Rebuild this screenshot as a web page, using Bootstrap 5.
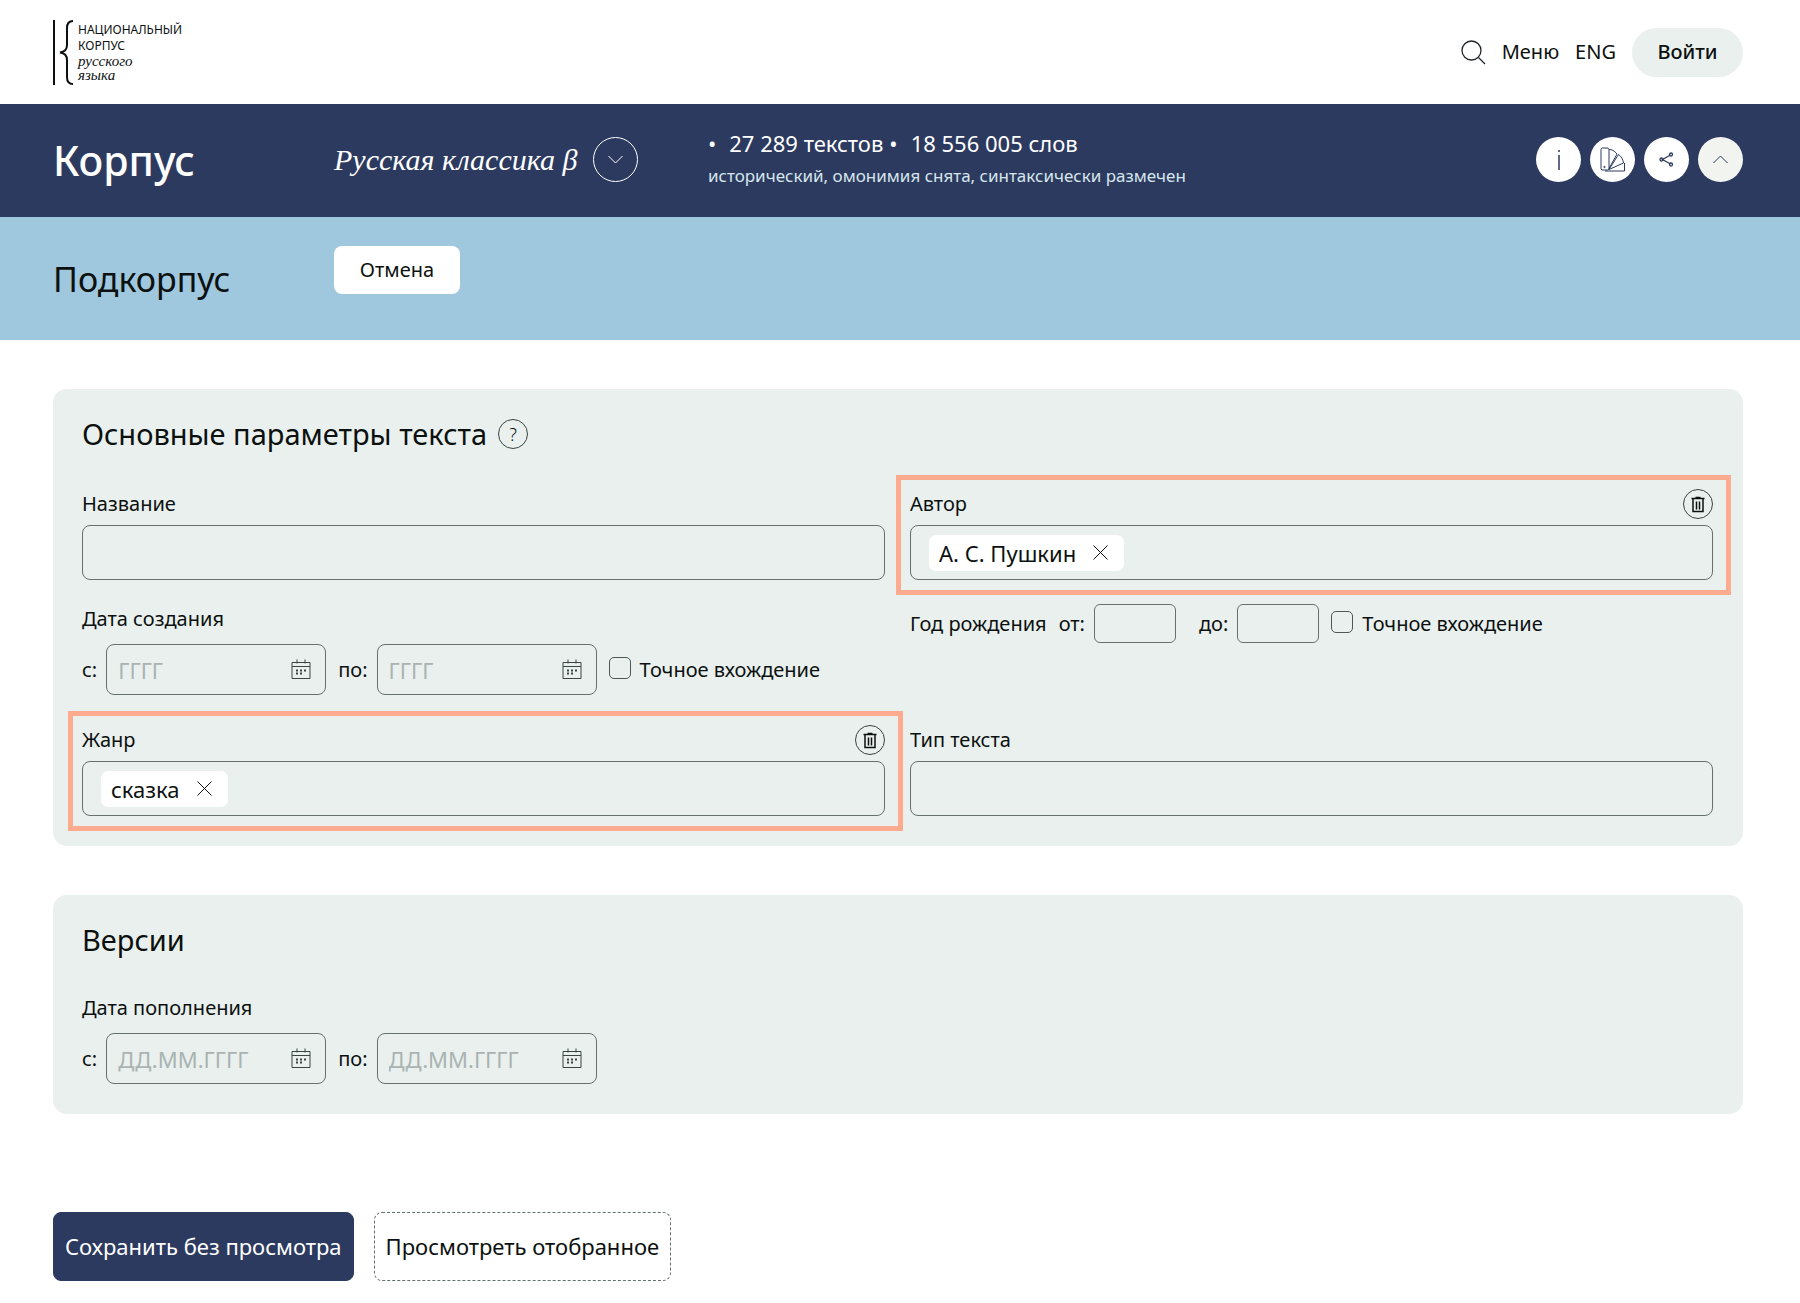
<!DOCTYPE html>
<html lang="ru">
<head>
<meta charset="utf-8">
<meta name="viewport" content="width=device-width, initial-scale=1">
<title>Национальный корпус русского языка</title>
<link href="https://cdn.jsdelivr.net/npm/bootstrap@5.3.0/dist/css/bootstrap.min.css" rel="stylesheet">
<style>
:root { --navy: #2d3a5f; --sky: #9fc7de; --mint: #e9f0ee; --ink: #0c1110; --line: #66706c; --mark: #ffab90; }
body { font-family: "Noto Sans", sans-serif; color: var(--ink); font-size: 20px; line-height: 30px; }
.gutter { padding-left: 53px; padding-right: 57px; }
svg { fill: none; stroke: currentColor; display: block; }
a { color: inherit; text-decoration: none; }
.serif { font-family: "Liberation Serif", serif; font-style: italic; }

.site-head { min-height: 104px; }
.logo-text { font-size: 12px; line-height: 16px; }
.logo-text .serif { font-size: 15px; line-height: 14px; }
.login { --bs-btn-bg: var(--mint); --bs-btn-color: var(--ink); --bs-btn-font-size: 20px; --bs-btn-font-weight: 500; width: 111px; height: 49px; padding: 0; }

.corpus-bar { background: var(--navy); min-height: 113px; padding-bottom: 2px; }
.title-col { width: 281px; flex: none; }
.name-col { width: 374px; flex: none; }
.corpus-title { font-size: 41px; font-weight: 500; line-height: 56px; }
.corpus-name { font-size: 30px; line-height: 40px; }
.stats { font-size: 22px; line-height: 32px; }
.stats li + li { margin-left: 6px; }
.stats li::before { content: "•"; margin-right: 13px; }
.tags { font-size: 17px; line-height: 34px; color: #d5e6ec; }
.round-btn { width: 45px; height: 45px; padding: 0; border: 0; border-radius: 50%; background: #fff; color: var(--navy); }
.round-btn.hollow { background: none; color: #fff; border: 1px solid #fff; }
.round-btn.soft { background: #f2f4f0; }

.sub-bar { background: var(--sky); min-height: 123px; }
.sub-title { font-size: 34px; line-height: 46px; }
.cancel { --bs-btn-bg: #fff; --bs-btn-color: var(--ink); --bs-btn-font-size: 20px; --bs-btn-border-radius: 8px; width: 126px; height: 48px; margin-top: 29px; padding: 0; }

.panel { background: var(--mint); border-radius: 14px; padding: 25px 30px 30px 29px; margin-top: 49px; }
.panel-title { font-size: 29px; line-height: 40px; margin-bottom: 35px; gap: 11px; }
.panel-title.tight { margin-bottom: 33px; }
.help, .trash { width: 30px; height: 30px; padding: 0; background: none; border: 1px solid #3a4441; border-radius: 50%; color: var(--ink); font-size: 18px; line-height: 28px; }
.help { font-weight: 300; }
.params { --bs-gutter-x: 25px; --bs-gutter-y: 0; }
.params > * { margin-bottom: 24px; }
.params > .dates { margin-bottom: 30px; }
.params > .last { margin-bottom: 0; }
.head-row { height: 30px; margin-bottom: 6px; }
.head-row.loose { margin-bottom: 10px; }
.box { border: 1px solid var(--line); border-radius: 8px; background: transparent; color: var(--ink); }
.box:focus-within, .box:focus { background: transparent; border-color: var(--navy); box-shadow: none; }
.text-box { height: 55px; width: 100%; }
.tag-box { padding: 0 18px; }
.tag-box input, .date-box input { flex: 1; min-width: 0; border: 0; outline: 0; background: transparent; padding: 0; }
.chip { height: 36px; background: #fff; border-radius: 7px; padding: 0 16px 0 10px; font-size: 22px; gap: 17px; }
.chip button { border: 0; background: none; padding: 0; color: var(--ink); }
.marked { position: relative; }
.marked::after { content: ""; position: absolute; inset: -14px -18px -15px -14px; border: 5px solid var(--mark); pointer-events: none; }
.date-box { width: 220px; height: 51px; padding: 0 14px 0 11px; font-size: 22px; }
.date-box input::placeholder { color: #aab3b0; opacity: 1; }
.date-box button { border: 0; background: none; padding: 0; color: #3a4441; }
.gap-field { gap: 9px; }
.gap-group { gap: 12px; }
.spread { margin-right: 11px; }
.year-box { width: 82px; height: 39px; border-radius: 6px; }
.tick { width: 22px; height: 22px; margin: 0 0 3px; border: 1px solid #4d5754; border-radius: 6px; background-color: transparent; }

.actions { margin-top: 98px; gap: 20px; padding-bottom: 22px; }
.actions .btn { --bs-btn-font-size: 22px; --bs-btn-border-radius: 8px; height: 69px; padding: 0 11px; }
.save { --bs-btn-bg: var(--navy); --bs-btn-color: #fff; --bs-btn-border-color: var(--navy); }
.preview { --bs-btn-color: var(--ink); --bs-btn-border-color: #66706c; border-style: dashed; }
</style>
<script src="https://cdn.jsdelivr.net/npm/bootstrap@5.3.0/dist/js/bootstrap.bundle.min.js"></script>
</head>
<body>
<svg class="d-none" aria-hidden="true">
  <symbol id="calendar" viewBox="0 0 20 21"><path d="M1 3.5h18v16H1zM1 7.5h18M6 .5v4M14 .5v4"/><path d="M5 11.5h2M9 11.5h2M13 11.5h2M5 14.5h2M9 14.5h2" stroke-width="2"/></symbol>
  <symbol id="bin" viewBox="0 0 14 17"><path d="M.5 2.5h13M4.500 1.500h5" stroke-width="1.500"/><path d="M2 3v12.500h10V3M5.500 5.500v8M8.500 5.500v8" stroke-width="1.500"/></symbol>
  <symbol id="cross" viewBox="0 0 15 15"><path d="M.5.5l14 14M14.500.5l-14 14"/></symbol>
</svg>

<header class="site-head gutter d-flex align-items-center justify-content-between">
  <a href="#" class="d-flex align-items-center">
    <svg width="21" height="67" viewBox="0 0 21 67" stroke-width="2"><path d="M1 1v65M20 2c-4 0-6 2-6 7v17c0 5-3 7-7 7.500 4 .5 7 2.500 7 7.500v17c0 5 2 7 6 7"/></svg>
    <span class="logo-text ps-1">НАЦИОНАЛЬНЫЙ<br>КОРПУС<br><span class="serif d-block">русского<br>языка</span></span>
  </a>
  <nav class="d-flex align-items-center gap-3">
    <button class="btn p-0 border-0" aria-label="Поиск"><svg width="25" height="25" viewBox="0 0 25 25" stroke-width="1.300"><circle cx="10.500" cy="10.500" r="9.500"/><path d="M17.500 17.500l6.500 6.500"/></svg></button>
    <a href="#">Меню</a>
    <a href="#">ENG</a>
    <button class="btn login rounded-pill">Войти</button>
  </nav>
</header>

<section class="corpus-bar gutter d-flex align-items-center text-white">
  <h1 class="title-col corpus-title m-0">Корпус</h1>
  <div class="name-col d-flex align-items-center gap-3">
    <span class="serif corpus-name">Русская классика β</span>
    <button class="round-btn hollow d-flex align-items-center justify-content-center" aria-label="Выбрать корпус"><svg width="15" height="9" viewBox="0 0 15 9"><path d="M.5 1l7 7 7-7"/></svg></button>
  </div>
  <div class="flex-grow-1">
    <ul class="stats list-unstyled d-flex m-0"><li>27 289 текстов</li><li>18 556 005 слов</li></ul>
    <div class="tags">исторический, омонимия снята, синтаксически размечен</div>
  </div>
  <div class="d-flex gap-field">
    <button class="round-btn d-flex align-items-center justify-content-center" aria-label="Информация"><svg width="4" height="22" viewBox="0 0 4 22" stroke-width="1.500"><path d="M2 1v2M2 6v15"/></svg></button>
    <button class="round-btn d-flex align-items-center justify-content-center" aria-label="Палитра"><svg width="25" height="25" viewBox="0 0 25 25"><path d="M1 2.500a2 2 0 0 1 1-1.500h6l1 1.500V22l-1.500 1H2l-1-1zM9 2.500c3 0 5 1 8 4.500L9 21.500M9 22.500L18.500 7.500c3 2 4.500 5 5 8.500L9 22.500M24.500 16v8H5"/><circle cx="4.500" cy="20" r=".7"/></svg></button>
    <button class="round-btn d-flex align-items-center justify-content-center" aria-label="Поделиться"><svg width="15" height="15" viewBox="0 0 15 15" stroke-width="1.300"><path d="M11.500 3L3.500 7.500l8 4.500"/><circle cx="2.500" cy="7.500" r="1.500"/><circle cx="12" cy="2.500" r="1.500"/><circle cx="12" cy="12.500" r="1.500"/></svg></button>
    <button class="round-btn soft d-flex align-items-center justify-content-center" aria-label="Свернуть"><svg width="15" height="9" viewBox="0 0 15 9"><path d="M.5 8l7-7 7 7"/></svg></button>
  </div>
</section>

<section class="sub-bar gutter d-flex">
  <h2 class="title-col sub-title fw-normal m-0 align-self-center">Подкорпус</h2>
  <div><button class="btn cancel">Отмена</button></div>
</section>

<main class="gutter">
  <form>
    <section class="panel">
      <h3 class="panel-title fw-normal d-flex align-items-center">Основные параметры текста <button type="button" class="help" aria-label="Справка">?</button></h3>
      <div class="row params">
        <div class="col-6">
          <div class="head-row"><label for="name">Название</label></div>
          <input id="name" type="text" class="box text-box px-3">
        </div>
        <div class="col-6">
          <div class="marked">
            <div class="head-row d-flex justify-content-between"><label for="author">Автор</label>
              <button type="button" class="trash d-flex align-items-center justify-content-center" aria-label="Очистить"><svg width="14" height="17"><use href="#bin"/></svg></button></div>
            <div class="box text-box tag-box d-flex align-items-center">
              <span class="chip d-flex align-items-center">А. С. Пушкин <button type="button" aria-label="Убрать"><svg width="15" height="15"><use href="#cross"/></svg></button></span>
              <input id="author" type="text">
            </div>
          </div>
        </div>
        <div class="col-6 dates">
          <div class="head-row loose">Дата создания</div>
          <div class="d-flex align-items-center gap-group">
            <div class="d-flex align-items-center gap-field"><label for="made-from">с:</label>
              <div class="box date-box d-flex align-items-center"><input id="made-from" type="text" placeholder="ГГГГ"><button type="button" aria-label="Календарь"><svg width="20" height="21"><use href="#calendar"/></svg></button></div></div>
            <div class="d-flex align-items-center gap-field"><label for="made-to">по:</label>
              <div class="box date-box d-flex align-items-center"><input id="made-to" type="text" placeholder="ГГГГ"><button type="button" aria-label="Календарь"><svg width="20" height="21"><use href="#calendar"/></svg></button></div></div>
            <div class="d-flex align-items-center gap-field"><input id="made-exact" type="checkbox" class="form-check-input tick"><label for="made-exact">Точное вхождение</label></div>
          </div>
        </div>
        <div class="col-6 dates">
          <div class="d-flex align-items-center gap-group">
            <span>Год рождения</span>
            <div class="d-flex align-items-center gap-field spread"><label for="born-from">от:</label><input id="born-from" type="text" class="box year-box px-2"></div>
            <div class="d-flex align-items-center gap-field"><label for="born-to">до:</label><input id="born-to" type="text" class="box year-box px-2"></div>
            <div class="d-flex align-items-center gap-field"><input id="born-exact" type="checkbox" class="form-check-input tick"><label for="born-exact">Точное вхождение</label></div>
          </div>
        </div>
        <div class="col-6 last">
          <div class="marked">
            <div class="head-row d-flex justify-content-between"><label for="genre">Жанр</label>
              <button type="button" class="trash d-flex align-items-center justify-content-center" aria-label="Очистить"><svg width="14" height="17"><use href="#bin"/></svg></button></div>
            <div class="box text-box tag-box d-flex align-items-center">
              <span class="chip d-flex align-items-center">сказка <button type="button" aria-label="Убрать"><svg width="15" height="15"><use href="#cross"/></svg></button></span>
              <input id="genre" type="text">
            </div>
          </div>
        </div>
        <div class="col-6 last">
          <div class="head-row"><label for="kind">Тип текста</label></div>
          <input id="kind" type="text" class="box text-box px-3">
        </div>
      </div>
    </section>

    <section class="panel">
      <h3 class="panel-title tight fw-normal">Версии</h3>
      <div class="head-row loose">Дата пополнения</div>
      <div class="d-flex align-items-center gap-group">
        <div class="d-flex align-items-center gap-field"><label for="added-from">с:</label>
          <div class="box date-box d-flex align-items-center"><input id="added-from" type="text" placeholder="ДД.ММ.ГГГГ"><button type="button" aria-label="Календарь"><svg width="20" height="21"><use href="#calendar"/></svg></button></div></div>
        <div class="d-flex align-items-center gap-field"><label for="added-to">по:</label>
          <div class="box date-box d-flex align-items-center"><input id="added-to" type="text" placeholder="ДД.ММ.ГГГГ"><button type="button" aria-label="Календарь"><svg width="20" height="21"><use href="#calendar"/></svg></button></div></div>
      </div>
    </section>

    <div class="actions d-flex">
      <button type="submit" class="btn save">Сохранить без просмотра</button>
      <button type="button" class="btn preview">Просмотреть отобранное</button>
    </div>
  </form>
</main>
</body>
</html>
